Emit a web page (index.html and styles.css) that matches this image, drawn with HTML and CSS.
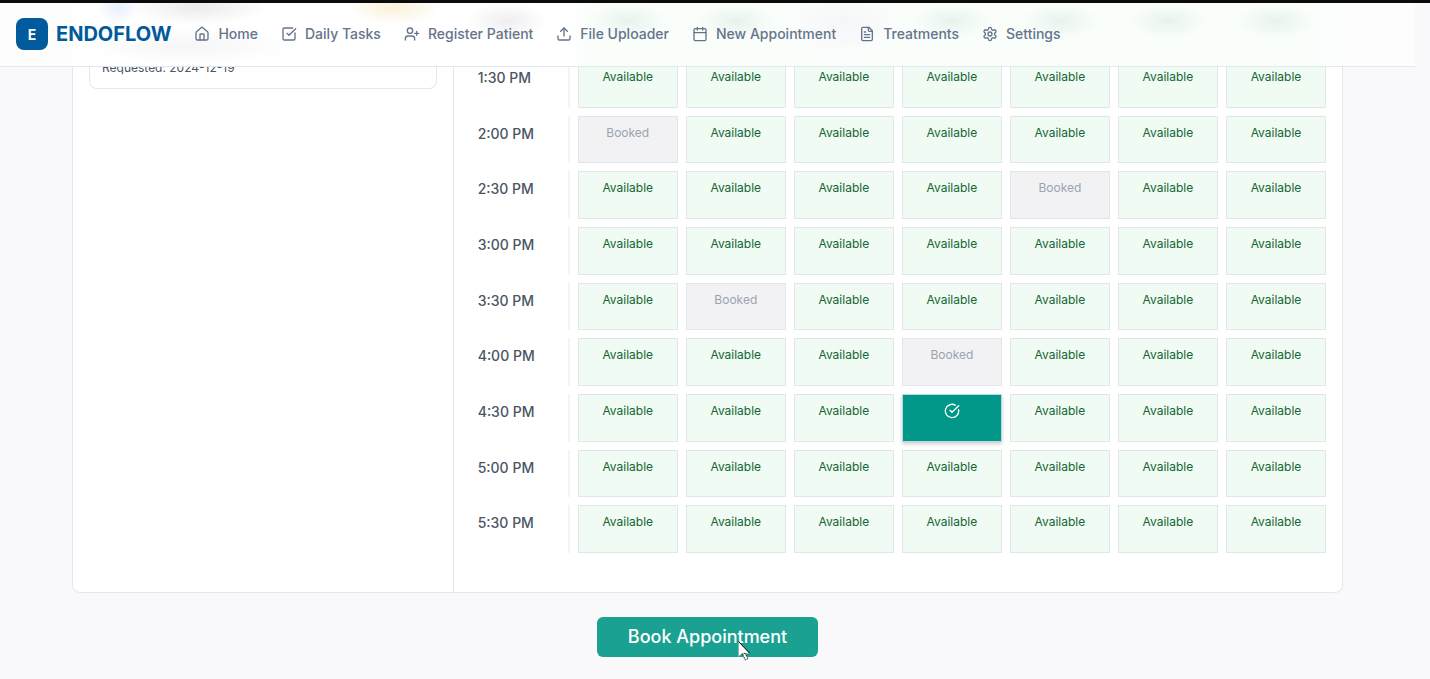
FILE: index.html
```html
<!DOCTYPE html>
<html lang="en">
<head>
<meta charset="utf-8">
<meta name="viewport" content="width=device-width, initial-scale=1">
<title>Endoflow</title>
<link rel="stylesheet" href="styles.css">
</head>
<body>
<header class="header">
  <a class="brand" href="#"><span class="brand-mark">E</span><span class="brand-name">ENDOFLOW</span></a>
  <nav class="nav">
    <a class="nav-link" href="#"><svg class="icon" viewBox="0 0 24 24"><path d="M15 21v-8a1 1 0 0 0-1-1h-4a1 1 0 0 0-1 1v8"/><path d="M3 10a2 2 0 0 1 .709-1.528l7-6a2 2 0 0 1 2.582 0l7 6A2 2 0 0 1 21 10v9a2 2 0 0 1-2 2H5a2 2 0 0 1-2-2z"/></svg>Home</a>
    <a class="nav-link" href="#"><svg class="icon" viewBox="0 0 24 24"><path d="M21 10.5V19a2 2 0 0 1-2 2H5a2 2 0 0 1-2-2V5a2 2 0 0 1 2-2h12.500"/><path d="m9 11 3 3L22 4"/></svg>Daily Tasks</a>
    <a class="nav-link" href="#"><svg class="icon" viewBox="0 0 24 24"><path d="M16 21v-2a4 4 0 0 0-4-4H6a4 4 0 0 0-4 4v2"/><circle cx="9" cy="7" r="4"/><path d="M19 8v6M22 11h-6"/></svg>Register Patient</a>
    <a class="nav-link" href="#"><svg class="icon" viewBox="0 0 24 24"><path d="M12 3v12"/><path d="m17 8-5-5-5 5"/><path d="M21 15v4a2 2 0 0 1-2 2H5a2 2 0 0 1-2-2v-4"/></svg>File Uploader</a>
    <a class="nav-link" href="#"><svg class="icon" viewBox="0 0 24 24"><path d="M8 2v4M16 2v4M3 10h18"/><rect x="3" y="4" width="18" height="18" rx="2"/></svg>New Appointment</a>
    <a class="nav-link" href="#"><svg class="icon" viewBox="0 0 24 24"><path d="M15 2H6a2 2 0 0 0-2 2v16a2 2 0 0 0 2 2h12a2 2 0 0 0 2-2V7z"/><path d="M14 2v4a2 2 0 0 0 2 2h4M10 9H8M16 13H8M16 17H8"/></svg>Treatments</a>
    <a class="nav-link" href="#"><svg class="icon" viewBox="0 0 24 24"><path d="M12.220 2h-.44a2 2 0 0 0-2 2v.18a2 2 0 0 1-1 1.730l-.43.25a2 2 0 0 1-2 0l-.15-.08a2 2 0 0 0-2.730.730l-.22.380a2 2 0 0 0 .730 2.730l.15.100a2 2 0 0 1 1 1.720v.510a2 2 0 0 1-1 1.740l-.15.090a2 2 0 0 0-.730 2.730l.22.380a2 2 0 0 0 2.730.730l.15-.080a2 2 0 0 1 2 0l.43.250a2 2 0 0 1 1 1.730V20a2 2 0 0 0 2 2h.44a2 2 0 0 0 2-2v-.180a2 2 0 0 1 1-1.730l.43-.250a2 2 0 0 1 2 0l.15.080a2 2 0 0 0 2.730-.730l.22-.390a2 2 0 0 0-.730-2.730l-.15-.080a2 2 0 0 1-1-1.740v-.500a2 2 0 0 1 1-1.740l.15-.090a2 2 0 0 0 .730-2.730l-.22-.380a2 2 0 0 0-2.730-.730l-.15.080a2 2 0 0 1-2 0l-.43-.250a2 2 0 0 1-1-1.730V4a2 2 0 0 0-2-2z"/><circle cx="12" cy="12" r="3"/></svg>Settings</a>
  </nav>
</header>
<main class="page">
  <section class="card">
    <aside class="requests">
      <article class="request">Requested: 2024-12-19</article>
    </aside>
    <div class="schedule">
      <table class="slots"><tbody id="slots"></tbody></table>
    </div>
  </section>
  <button class="book" type="button">Book Appointment
    <svg class="pointer" viewBox="0 0 14 22" aria-hidden="true"><path d="M.5.5v15l3.500-3h7.500z" fill="#fff" stroke="#999" stroke-width=".6"/><path d="M4.500 13l2.800 6 2.500-1.200-2.600-5.600z" fill="#fff" stroke="#222" stroke-width="1" stroke-dasharray="2 1"/><path d="M.5.5l11.500 12" fill="none" stroke="#111"/></svg>
  </button>
</main>
<script src="slots.js"></script>
</body>
</html>
```

FILE: styles.css
```css
* { box-sizing: border-box; }

body {
  margin: 0;
  padding-right: 15px;
  min-height: 100vh;
  overflow: hidden;
  border-top: 3px solid #0c0b0b;
  background: #f9f9fc;
  font-family: Inter, "Liberation Sans", sans-serif;
  color: #4b5563;
}

.header {
  position: absolute;
  z-index: 2;
  top: 3px;
  left: 0;
  right: 15px;
  height: 64px;
  display: flex;
  align-items: center;
  gap: 23px;
  padding: 0 16px 1px;
  border-bottom: 1px solid #e2e8f0;
  background:
    radial-gradient(22px 18px at 118px 4px, #e8f0fa, transparent),
    radial-gradient(70px 18px at 198px 4px, #ebebed, transparent),
    radial-gradient(48px 18px at 394px 4px, #faf1d8, transparent),
    radial-gradient(110px 18px at 190px 43px, #f6f6f8, transparent),
    radial-gradient(40px 18px at 507px 18px, #eeeef1, transparent),
    radial-gradient(40px 18px at 628px 18px, #e8f3ec, transparent),
    radial-gradient(40px 18px at 736px 18px, #e8f3ec, transparent),
    radial-gradient(60px 36px at 844px 20px, #f6f6f9, transparent),
    radial-gradient(40px 18px at 952px 18px, #e8f3ec, transparent),
    radial-gradient(40px 18px at 1060px 18px, #e8f3ec, transparent),
    radial-gradient(40px 18px at 1168px 18px, #e8f3ec, transparent),
    radial-gradient(40px 18px at 1276px 18px, #e8f3ec, transparent),
    linear-gradient(90deg, #fdfdfe 70px, #fff 80px, #fff 566px, #fafefb 590px, #fafefb 1316px, #fdfdfe 1345px);
}

.brand {
  display: flex;
  align-items: center;
  gap: 8px;
  color: #005a9c;
  text-decoration: none;
  font-weight: 700;
}

.brand-mark {
  display: grid;
  place-items: center;
  width: 32px;
  height: 32px;
  border-radius: 8px;
  background: #005a9c;
  color: #fff;
  font-size: 14px;
}

.brand-name { font-size: 20px; line-height: 28px; }

.nav { display: flex; gap: 23px; }

.nav-link {
  display: flex;
  align-items: center;
  gap: 8px;
  color: #64748b;
  text-decoration: none;
  white-space: nowrap;
  font-size: 14px;
  font-weight: 500;
  line-height: 20px;
}

.icon {
  width: 16px;
  height: 16px;
  fill: none;
  stroke: currentColor;
  stroke-width: 2;
  stroke-linecap: round;
  stroke-linejoin: round;
}

.page {
  display: flex;
  flex-direction: column;
  align-items: center;
  gap: 24px;
  padding: 0 72px 22px;
}

.card {
  align-self: stretch;
  display: grid;
  grid-template-columns: 3fr 7fr;
  border: 1px solid #e2e8f0;
  border-top: 0;
  border-radius: 0 0 8px 8px;
  background: #fff;
}

.requests { padding: 0 16px; border-right: 1px solid #e2e8f0; }

.request {
  padding: 57px 12px 12px;
  border: 1px solid #e5e7eb;
  border-top: 0;
  border-radius: 0 0 8px 8px;
  font-size: 12px;
  line-height: 16px;
}

.schedule { padding: 57px 16px 39px; }

.slots { display: block; }

.slots tbody {
  display: grid;
  grid-template-columns: repeat(8, 1fr);
  grid-auto-rows: 1fr;
  gap: 8px;
  min-height: 493px;
}

.slots tr { display: contents; }

.time {
  padding: 8px;
  border-right: 2px solid #f1f5f9;
  text-align: left;
  font-size: 14px;
  font-weight: 500;
  line-height: 20px;
}

.cell { display: grid; padding: 0; }

.slot {
  display: flex;
  align-items: flex-start;
  justify-content: center;
  padding: 8px;
  border: 1px solid #e2e6e8;
  background: #effbf3;
  color: #166534;
  font-family: inherit;
  font-size: 12px;
  line-height: 16px;
}

.slot.booked { background: #f2f2f5; color: #9ca3af; }

.slot.selected {
  border-color: #b2dfdb;
  background: #009688;
  color: #fff;
  box-shadow: 0 2px 4px rgba(0, 0, 0, .2);
}

.book {
  position: relative;
  padding: 6px 31px;
  border: 0;
  border-radius: 6px;
  background: #1aa192;
  color: #fff;
  font-family: inherit;
  font-size: 18px;
  font-weight: 500;
  line-height: 28px;
}

.pointer {
  position: absolute;
  left: 141px;
  top: 24px;
  width: 14px;
  height: 22px;
}
```

FILE: slots.js
```js
const times = ["1:30", "2:00", "2:30", "3:00", "3:30", "4:00", "4:30", "5:00", "5:30"];
const booked = { "2:00": 0, "2:30": 4, "3:30": 1, "4:00": 3 };
const selected = { "4:30": 3 };
const check = '<svg class="icon" viewBox="0 0 24 24"><path d="M21.801 10A10 10 0 1 1 17 3.335"/><path d="m9 11 3 3L22 4"/></svg>';

function slot(time, day) {
  if (selected[time] === day) {
    return `<button type="button" class="slot selected" aria-label="Selected">${check}</button>`;
  }
  if (booked[time] === day) {
    return '<button type="button" class="slot booked">Booked</button>';
  }
  return '<button type="button" class="slot">Available</button>';
}

document.getElementById("slots").innerHTML = times.map(time => {
  const cells = [0, 1, 2, 3, 4, 5, 6].map(day => `<td class="cell">${slot(time, day)}</td>`).join("");
  return `<tr><th class="time" scope="row">${time} PM</th>${cells}</tr>`;
}).join("");
```
